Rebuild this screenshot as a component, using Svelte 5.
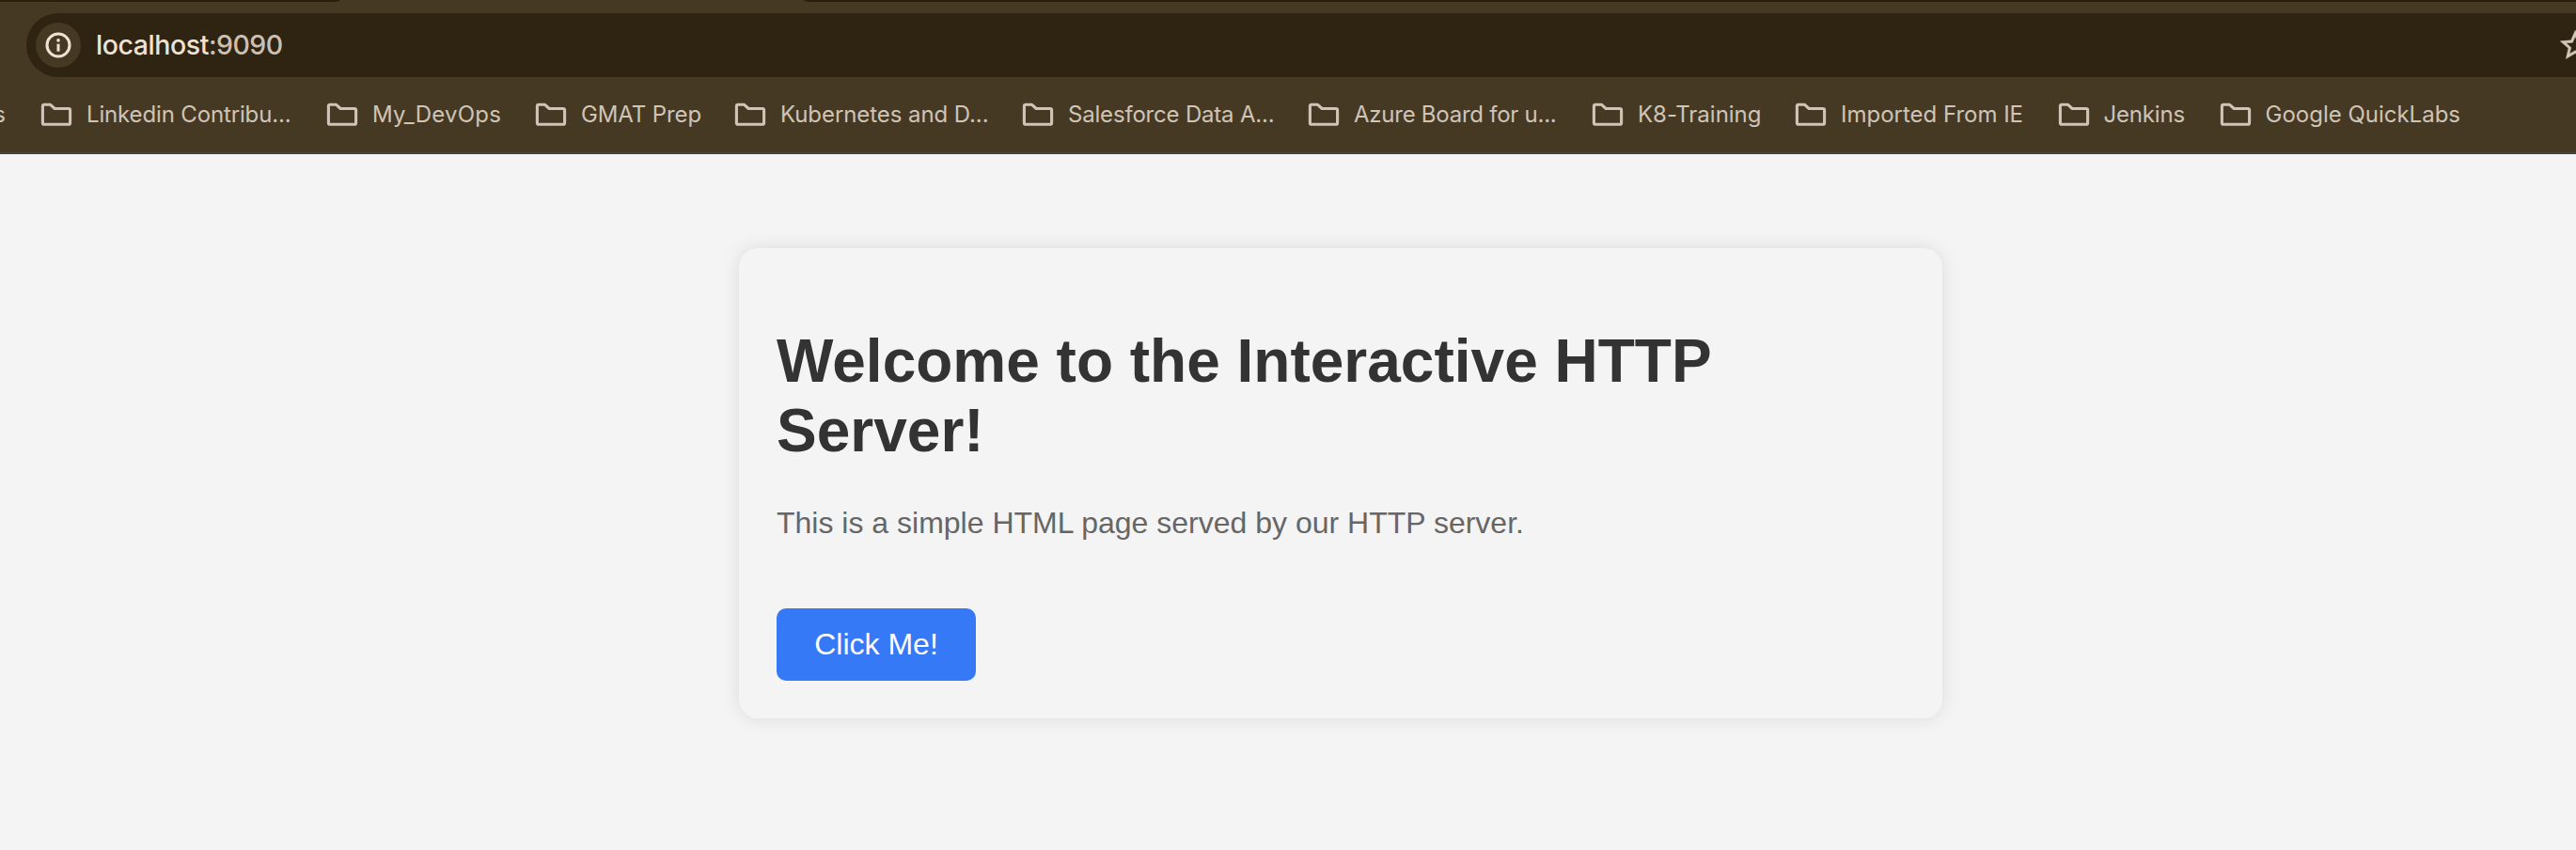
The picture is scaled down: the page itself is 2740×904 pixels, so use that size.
<script>
  // slot: distance to the next folder; label: drawn width of the caption
  const bookmarks = [
    { name: 'Linkedin Contribu...', slot: 304, label: 216 },
    { name: 'My_DevOps', slot: 222, label: 135.5 },
    { name: 'GMAT Prep', slot: 212, label: 126.5 },
    { name: 'Kubernetes and D...', slot: 306, label: 220 },
    { name: 'Salesforce Data A...', slot: 304, label: 218 },
    { name: 'Azure Board for u...', slot: 302, label: 214 },
    { name: 'K8-Training', slot: 216, label: 130 },
    { name: 'Imported From IE', slot: 279.5, label: 192.5 },
    { name: 'Jenkins', slot: 172, label: 85 },
    { name: 'Google QuickLabs', slot: 260, label: 206 }
  ];

  // Tracks the text so that it fills the given width
  function fit(node, width) {
    const natural = node.getBoundingClientRect().width;
    const target = width + 1.5;
    node.style.letterSpacing = (target - natural) / node.textContent.length + 'px';
  }
</script>

<div class="browser">
  <div class="tabs">
    <div class="tab-edge left"></div>
    <div class="tab-edge right"></div>
  </div>
  <div class="toolbar">
    <div class="omnibox">
      <div class="info">
        <svg width="28" height="28" viewBox="0 0 28 28">
          <circle cx="14" cy="14" r="12" fill="none" stroke="#ece1d2" stroke-width="3.1" />
          <rect x="12.5" y="12.7" width="3" height="8" fill="#ece1d2" />
          <circle cx="14" cy="8.9" r="1.8" fill="#ece1d2" />
        </svg>
      </div>
      <div class="url"><span class="host" use:fit={118.5}>localhost</span><span class="port" use:fit={77}>:9090</span></div>
      <svg class="star" width="38.4" height="38.4" viewBox="0 0 24 24">
        <path fill="#d1c6b8" stroke="#d1c6b8" stroke-width="0.3" d="M22 9.24l-7.19-.62L12 2 9.19 8.63 2 9.24l5.46 4.73L5.82 21 12 17.27 18.18 21l-1.63-7.03L22 9.24zM12 15.4l-3.76 2.27 1-4.28-3.32-2.88 4.38-.38L12 6.1l1.71 4.04 4.38.38-3.32 2.88 1 4.28L12 15.4z" />
      </svg>
    </div>
  </div>
  <nav class="bookmarks">
    <span class="cut">s</span>
    {#each bookmarks as b}
      <div class="bookmark" style:width="{b.slot}px">
        <svg class="folder" width="34" height="26" viewBox="0 0 34 26">
          <path d="M4 2.3H10.6L15.2 6.5H30Q31.6 6.5 31.6 8.1V21.7Q31.6 23.3 30 23.3H4Q2.4 23.3 2.4 21.7V3.9Q2.4 2.3 4 2.3Z" fill="none" stroke="#cfc4b6" stroke-width="3.1" stroke-linejoin="round" />
        </svg>
        <span use:fit={b.label}>{b.name}</span>
      </div>
    {/each}
  </nav>
</div>

<main>
  <section class="card">
    <h1>Welcome to the Interactive HTTP Server!</h1>
    <p>This is a simple HTML page served by our HTTP server.</p>
    <button>Click Me!</button>
  </section>
</main>

<style>
  :global(body) {
    margin: 0;
    background: #f4f4f4;
  }
  .browser {
    box-sizing: border-box;
    height: 164px;
    background: #463924;
    border-bottom: 2px solid #4a453e;
    font-family: Inter, sans-serif;
    overflow: hidden;
  }
  .tabs {
    display: flex;
    justify-content: space-between;
    height: 14px;
  }
  .tab-edge {
    height: 2px;
    background: #2b1c0c;
  }
  .left {
    width: 362px;
    border-bottom-right-radius: 9px 2px;
  }
  .right {
    width: 1885px;
    border-bottom-left-radius: 9px 2px;
  }
  .toolbar {
    height: 68px;
    padding-left: 28px;
  }
  .omnibox {
    box-sizing: border-box;
    display: flex;
    align-items: center;
    height: 68px;
    padding-left: 10px;
    background: #2f2412;
    border-radius: 34px 0 0 34px;
    overflow: hidden;
  }
  .info {
    display: flex;
    align-items: center;
    justify-content: center;
    flex: none;
    width: 48px;
    height: 48px;
    border-radius: 50%;
    background: #463924;
  }
  .url {
    flex: 1;
    margin-left: 16px;
    font-size: 28.5px;
    font-weight: 500;
    line-height: 40px;
    white-space: nowrap;
  }
  .url span {
    display: inline-block;
  }
  .host {
    color: #ede2d3;
  }
  .port {
    color: #cbc0b1;
  }
  .star {
    flex: none;
    margin-right: -18.7px;
  }
  .bookmarks {
    display: flex;
    align-items: center;
    height: 80px;
    color: #cfc4b6;
    font-size: 24px;
    line-height: 30px;
    white-space: nowrap;
  }
  .cut {
    display: flex;
    justify-content: flex-end;
    width: 6px;
    margin-right: 37px;
    overflow: hidden;
  }
  .bookmark {
    display: flex;
    align-items: center;
    flex: none;
  }
  .folder {
    flex: none;
    margin-right: 15px;
  }
  .bookmark span {
    flex: none;
  }
  main {
    box-sizing: border-box;
    display: flex;
    align-items: flex-start;
    height: 740px;
    padding: 100px 0 0 786px;
    font-family: "Liberation Sans", Arial, sans-serif;
  }
  .card {
    box-sizing: border-box;
    width: 1280px;
    height: 500px;
    padding: 83px 40px 40px;
    border-radius: 20px;
    background: #f4f4f4;
    box-shadow: 0 0 20px rgba(0, 0, 0, 0.1);
  }
  h1 {
    margin: 0 0 43px;
    color: #333;
    font-size: 64px;
    line-height: 74px;
  }
  p {
    margin: 0 0 73px;
    color: #666;
    font-size: 32px;
    line-height: 36px;
  }
  button {
    display: block;
    width: 212px;
    height: 77px;
    padding: 0;
    border: 0;
    border-radius: 10px;
    background: #3579f6;
    color: #fff;
    font: 32px "Liberation Sans", Arial, sans-serif;
  }
</style>
